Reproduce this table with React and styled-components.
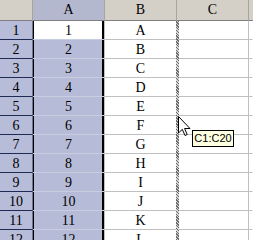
import React from "react";
import styled, { createGlobalStyle } from "styled-components";

const GlobalStyle = createGlobalStyle`
  html, body {
    margin: 0;
    padding: 0;
    background: #ffffff;
    overflow: hidden;
  }
`;

const letters = "ABCDEFGHIJKLMNOPQRST".split("");
const rows = Array.from({ length: 13 }, (_, i) => i + 1);

const App = () => {
  return (
    <Sheet>
      <GlobalStyle />
      <Grid>
        <Corner />
        <ColHead $active>A</ColHead>
        <ColHead>B</ColHead>
        <ColHead>C</ColHead>
        <ColHead $tail />
        {rows.map((n) => (
          <React.Fragment key={n}>
            <RowHead>{n}</RowHead>
            <Cell $sel $active={n === 1}>{n}</Cell>
            <Cell>{letters[n - 1]}</Cell>
            <Cell />
            <Cell $tail />
          </React.Fragment>
        ))}
      </Grid>
      <Marquee />
      <Cursor viewBox="0 0 13 21" width="13" height="21">
        <path
          d="M0.5 0.5 L0.5 17 L4.3 13.4 L7 19.5 L9.2 18.5 L6.6 12.5 L12 12.5 Z"
          fill="#ffffff"
          stroke="#000000"
          strokeWidth="1"
        />
      </Cursor>
      <Tip>C1:C20</Tip>
    </Sheet>
  );
};

export default App;

const Sheet = styled.div`
  position: relative;
  width: 253px;
  height: 240px;
  overflow: hidden;
  background: #ffffff;
  font-family: "Liberation Serif", "DejaVu Serif", serif;
`;

const Grid = styled.div`
  display: grid;
  grid-template-columns: 33px 72px 72px 72px 4px;
  grid-template-rows: 21px repeat(13, 19px);
`;

const Corner = styled.div`
  background: #d4d0c8;
  border-right: 1px solid #a8a59d;
  border-bottom: 1px solid #808080;
`;

const ColHead = styled.div`
  display: flex;
  align-items: center;
  justify-content: center;
  font-size: 14px;
  color: #000;
  background: ${(p) => (p.$active ? "#b4b8cf" : "#d4d0c8")};
  border-right: ${(p) => (p.$tail ? "none" : "1px solid #a8a59d")};
  border-bottom: 1px solid #808080;
`;

const RowHead = styled.div`
  display: flex;
  align-items: center;
  justify-content: center;
  padding-top: 1px;
  font-size: 14px;
  color: #000;
  background: #b7bcd9;
  border-bottom: 1px solid #1f2a55;
  border-right: 1px solid #6e7494;
`;

const Cell = styled.div`
  display: flex;
  align-items: center;
  justify-content: center;
  padding-top: 1px;
  font-size: 14px;
  color: #000;
  background: ${(p) => (p.$active ? "#ffffff" : p.$sel ? "#b6bcd8" : "#ffffff")};
  border-bottom: 1px solid ${(p) => (p.$sel ? "#c9cde0" : "#c0c0c0")};
  border-right: 1px solid ${(p) => (p.$tail ? "transparent" : "#c0c0c0")};
  box-shadow: ${(p) =>
    p.$sel ? "inset 1px 0 0 #000, inset -2px 0 0 #000" : "none"};
`;

const Marquee = styled.div`
  position: absolute;
  left: 176px;
  top: 21px;
  width: 3px;
  height: 219px;
  background-image: repeating-linear-gradient(
    45deg,
    #6a6a6a 0 1px,
    #d8d8d8 1px 2px
  );
`;

const Cursor = styled.svg`
  position: absolute;
  left: 178px;
  top: 116px;
`;

const Tip = styled.div`
  position: absolute;
  left: 192px;
  top: 130px;
  width: 40px;
  height: 15px;
  border: 1px solid #000;
  background: #ffffe1;
  font-family: "Liberation Sans", Arial, sans-serif;
  font-size: 11px;
  line-height: 15px;
  text-align: center;
  color: #000;
`;
